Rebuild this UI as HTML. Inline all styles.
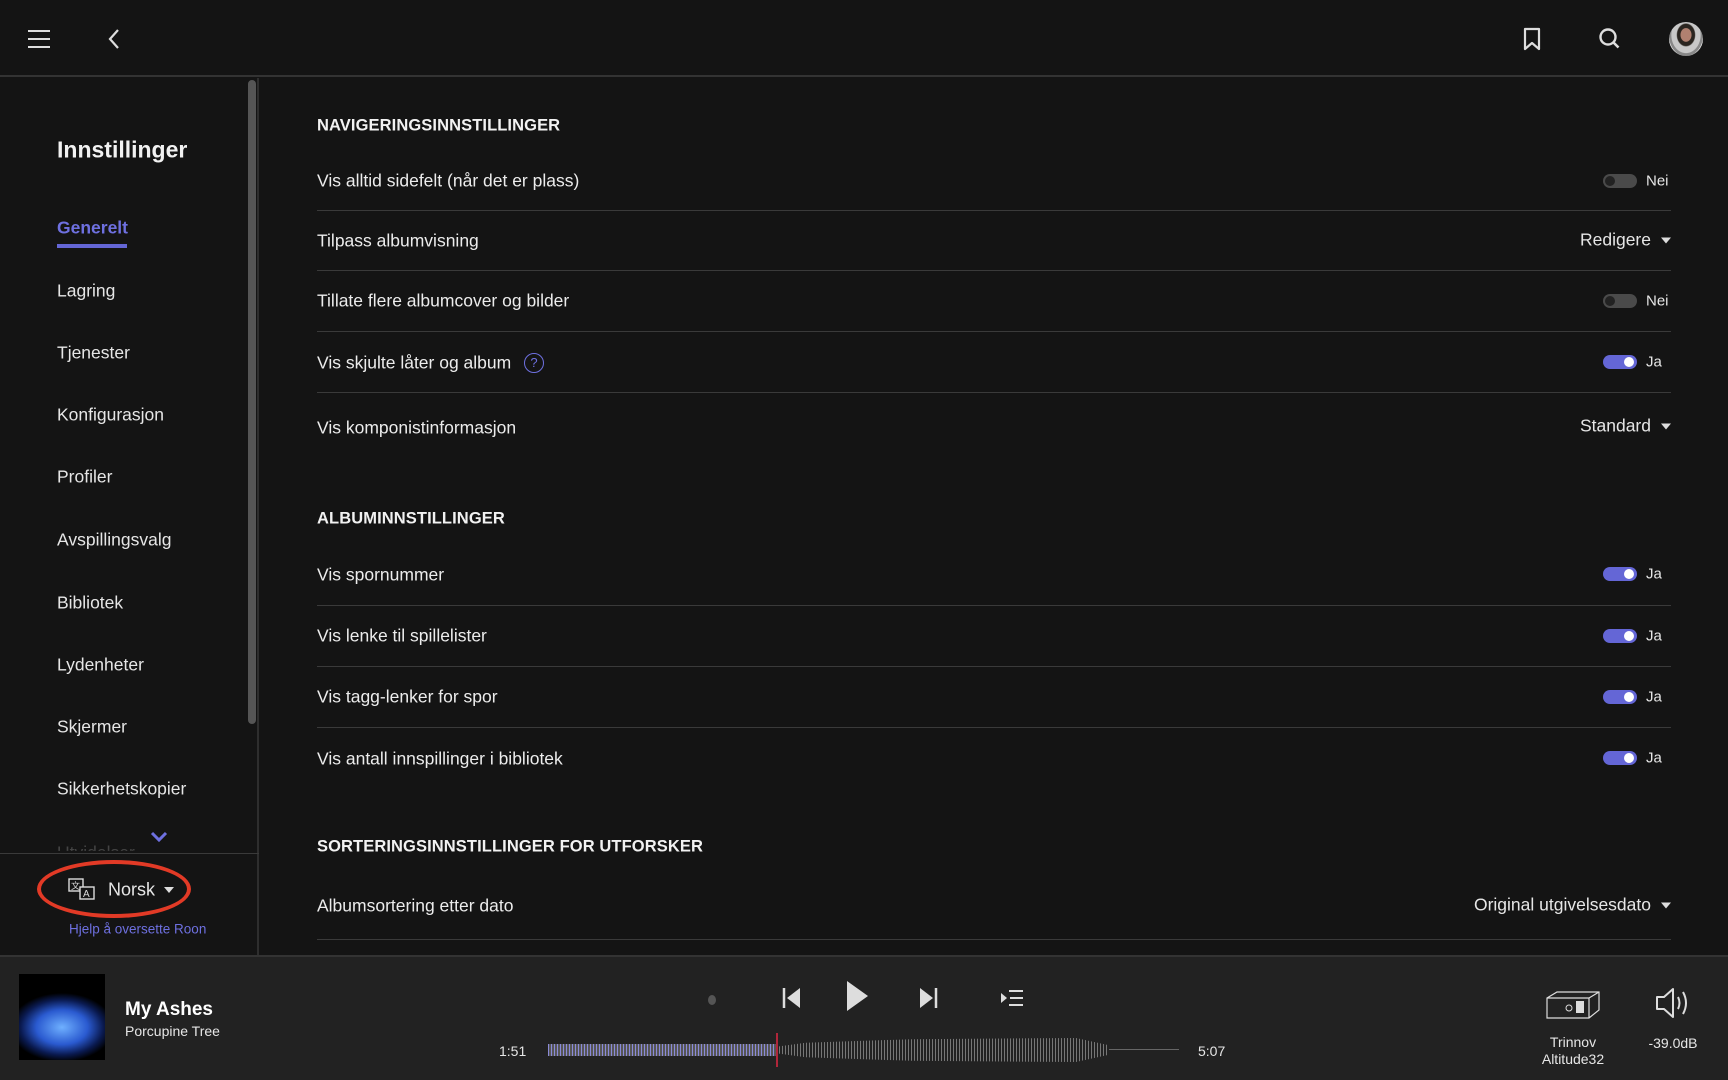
<!DOCTYPE html>
<html><head><meta charset="utf-8"><style>
*{margin:0;padding:0;box-sizing:border-box}
body{width:1728px;height:1080px;background:#141414;font-family:"Liberation Sans",sans-serif;color:#e6e6e6;position:relative;overflow:hidden}
.a{position:absolute}
.hdr{left:0;top:0;width:1728px;height:77px;background:#141414;border-bottom:2px solid #333}
.side{left:0;top:78px;width:259px;height:877px;border-right:2px solid #2e2e2e}
.nav{left:57px;font-size:17.5px;color:#e6e6e6;transform:translateY(-50%)}
.row{left:317px;font-size:17.5px;transform:translateY(-50%);color:#ececec}
.hd{left:317px;font-size:16.5px;font-weight:bold;transform:translateY(-50%);color:#f2f2f2;letter-spacing:.1px}
.div{left:317px;width:1354px;height:1px;background:#3a3a3a}
.tg{left:1603px;width:34px;height:14px;border-radius:7px;transform:translateY(-50%)}
.tg.off{background:#4a4a4a}.tg.off:after{content:"";position:absolute;left:2px;top:2px;width:10px;height:10px;border-radius:50%;background:#222}
.tg.on{background:#6466d6}.tg.on:after{content:"";position:absolute;right:3px;top:2px;width:10px;height:10px;border-radius:50%;background:#fff}
.tl{left:1646px;font-size:15px;transform:translateY(-50%)}
.dd{right:57px;font-size:17.5px;transform:translateY(-50%)}
.dd:after{content:"";display:inline-block;margin-left:10px;border-left:5px solid transparent;border-right:5px solid transparent;border-top:6px solid #ddd;vertical-align:middle}
.bot{left:0;top:955px;width:1728px;height:125px;background:#222;border-top:2px solid #333}
</style></head><body>
<div class="a hdr">
<svg class="a" style="left:27px;top:28px" width="24" height="22"><path d="M1 3h22M1 11h22M1 19h22" stroke="#ddd" stroke-width="2"/></svg>
<svg class="a" style="left:107px;top:28px" width="14" height="22"><path d="M11 2L3 11l8 9" stroke="#ddd" stroke-width="2.2" fill="none"/></svg>
<svg class="a" style="left:1522px;top:27px" width="20" height="24"><path d="M3 2h14v20l-7-6-7 6z" stroke="#ddd" stroke-width="2.2" fill="none" stroke-linejoin="round"/></svg>
<svg class="a" style="left:1598px;top:27px" width="24" height="24"><circle cx="10" cy="10" r="7.5" stroke="#ddd" stroke-width="2.4" fill="none"/><path d="M15.5 15.5l5 5" stroke="#ddd" stroke-width="2.6"/></svg>
<div class="a" style="left:1669px;top:22px;width:34px;height:34px;border-radius:50%;background:radial-gradient(ellipse at 50% 38%,#b08070 0 22%,#2a2520 24% 36%,#c8c8c8 40% 60%,#888 62% 70%,#e0e0e0 72%)"></div>
</div>
<div class="a side">
<div class="a" style="left:248px;top:2px;width:8px;height:644px;border-radius:4px;background:#555"></div>
<div class="a" style="left:57px;top:72px;font-size:23px;font-weight:bold;color:#f2f2f2;transform:translateY(-50%)">Innstillinger</div>
<div class="a" style="left:0px;top:775px;width:259px;height:1px;background:#3a3a3a"></div>
</div>
<div class="a nav" style="top:228px;color:#6e70e0;font-weight:bold">Generelt</div>
<div class="a" style="left:57px;top:244px;width:70px;height:4px;background:#6466d6"></div>
<div class="a nav" style="top:291px">Lagring</div>
<div class="a nav" style="top:353px">Tjenester</div>
<div class="a nav" style="top:415px">Konfigurasjon</div>
<div class="a nav" style="top:477px">Profiler</div>
<div class="a nav" style="top:540px">Avspillingsvalg</div>
<div class="a nav" style="top:603px">Bibliotek</div>
<div class="a nav" style="top:665px">Lydenheter</div>
<div class="a nav" style="top:727px">Skjermer</div>
<div class="a nav" style="top:789px">Sikkerhetskopier</div>
<div class="a nav" style="top:853px;color:#444;clip-path:inset(0 0 60% 0)">Utvidelser</div>
<svg class="a" style="left:150px;top:831px" width="18" height="12"><path d="M2 2l7 7 7-7" stroke="#6e70e0" stroke-width="3" fill="none"/></svg>
<div class="a" style="left:37px;top:860px;width:154px;height:58px;border:4px solid #e23a26;border-radius:50%"></div>
<svg class="a" style="left:68px;top:878px" width="32" height="26"><rect x="1" y="1" width="14" height="12" stroke="#ddd" fill="none" stroke-width="1.4"/><rect x="12" y="9" width="14" height="12" stroke="#ddd" fill="#141414" stroke-width="1.4"/><text x="3" y="11" font-size="9" fill="#ddd">文</text><text x="15" y="19" font-size="10" fill="#ddd">A</text></svg>
<div class="a" style="left:108px;top:890px;font-size:18px;transform:translateY(-50%)">Norsk</div>
<div class="a" style="left:164px;top:887px;border-left:5px solid transparent;border-right:5px solid transparent;border-top:6px solid #ddd"></div>
<div class="a" style="left:69px;top:929px;font-size:13.5px;color:#6e70e0;transform:translateY(-50%)">Hjelp å oversette Roon</div>

<div class="a hd" style="top:126px">NAVIGERINGSINNSTILLINGER</div>
<div class="a row" style="top:181px">Vis alltid sidefelt (når det er plass)</div><div class="a tg off" style="top:181px"></div><div class="a tl" style="top:181px">Nei</div>
<div class="a div" style="top:210px"></div>
<div class="a row" style="top:241px">Tilpass albumvisning</div><div class="a dd" style="top:240px">Redigere</div>
<div class="a div" style="top:270px"></div>
<div class="a row" style="top:301px">Tillate flere albumcover og bilder</div><div class="a tg off" style="top:301px"></div><div class="a tl" style="top:301px">Nei</div>
<div class="a div" style="top:331px"></div>
<div class="a row" style="top:363px">Vis skjulte låter og album</div>
<div class="a" style="left:524px;top:353px;width:20px;height:20px;border:1.6px solid #6e70e0;border-radius:50%;color:#6e70e0;font-size:13px;text-align:center;line-height:17px">?</div>
<div class="a tg on" style="top:362px"></div><div class="a tl" style="top:362px">Ja</div>
<div class="a div" style="top:392px"></div>
<div class="a row" style="top:428px">Vis komponistinformasjon</div><div class="a dd" style="top:426px">Standard</div>

<div class="a hd" style="top:519px">ALBUMINNSTILLINGER</div>
<div class="a row" style="top:575px">Vis spornummer</div><div class="a tg on" style="top:574px"></div><div class="a tl" style="top:574px">Ja</div>
<div class="a div" style="top:605px"></div>
<div class="a row" style="top:636px">Vis lenke til spillelister</div><div class="a tg on" style="top:636px"></div><div class="a tl" style="top:636px">Ja</div>
<div class="a div" style="top:666px"></div>
<div class="a row" style="top:697px">Vis tagg-lenker for spor</div><div class="a tg on" style="top:697px"></div><div class="a tl" style="top:697px">Ja</div>
<div class="a div" style="top:727px"></div>
<div class="a row" style="top:759px">Vis antall innspillinger i bibliotek</div><div class="a tg on" style="top:758px"></div><div class="a tl" style="top:758px">Ja</div>

<div class="a hd" style="top:847px">SORTERINGSINNSTILLINGER FOR UTFORSKER</div>
<div class="a row" style="top:906px">Albumsortering etter dato</div><div class="a dd" style="top:905px">Original utgivelsesdato</div>
<div class="a div" style="top:939px"></div>

<div class="a bot">
<div class="a" style="left:19px;top:17px;width:86px;height:86px;background:radial-gradient(ellipse 60% 40% at 50% 62%,#6fb0ff 0,#2a5ad0 50%,#0a1a50 80%,#000 100%)"></div>
<div class="a" style="left:125px;top:53px;font-size:19px;font-weight:bold;color:#fff;transform:translateY(-50%)">My Ashes</div>
<div class="a" style="left:125px;top:74px;font-size:14px;transform:translateY(-50%)">Porcupine Tree</div>
<div class="a" style="left:708px;top:38px;width:8px;height:10px;border-radius:50%;background:#555"></div>
<svg class="a" style="left:782px;top:30px" width="20" height="22"><path d="M2 1v20" stroke="#ddd" stroke-width="2.5"/><path d="M18 1v20L5 11z" fill="#ddd"/></svg>
<svg class="a" style="left:846px;top:23px" width="24" height="32"><path d="M1 1v30l21-15z" fill="#ddd"/></svg>
<svg class="a" style="left:918px;top:30px" width="20" height="22"><path d="M18 1v20" stroke="#ddd" stroke-width="2.5"/><path d="M2 1v20L15 11z" fill="#ddd"/></svg>
<svg class="a" style="left:1000px;top:33px" width="24" height="16"><path d="M1 3l6 5-6 5z" fill="#ddd"/><path d="M9 1h14M10 8h13M9 15h14" stroke="#ddd" stroke-width="2"/></svg>
<div class="a" style="left:499px;top:94px;font-size:14px;transform:translateY(-50%)">1:51</div>
<div class="a" style="left:1198px;top:94px;font-size:14px;transform:translateY(-50%)">5:07</div>
<div class="a" style="left:548px;top:87px;width:228px;height:12px;background:repeating-linear-gradient(90deg,#8a8ad8 0 1px,#555 1px 3px)"></div>
<div class="a" style="left:776px;top:76px;width:2px;height:34px;background:#b0263a"></div>
<div class="a" style="left:779px;top:81px;width:330px;height:24px;background:repeating-linear-gradient(90deg,#777 0 1px,transparent 1px 3px);clip-path:polygon(0 35%,8% 20%,40% 5%,90% 0,100% 30%,100% 70%,90% 100%,40% 95%,8% 80%,0 65%)"></div>
<div class="a" style="left:1109px;top:92px;width:70px;height:1px;background:#666"></div>
<svg class="a" style="left:1545px;top:33px" width="56" height="30"><path d="M2 8l10-6h42v18l-10 8H2z M2 8h42v20M44 8l10-6" stroke="#ddd" fill="none" stroke-width="1.2"/><circle cx="24" cy="18" r="3" stroke="#ddd" fill="none"/><rect x="31" y="11" width="8" height="12" fill="#ddd"/></svg>
<div class="a" style="left:1573px;top:94px;font-size:14px;text-align:center;line-height:17px;transform:translate(-50%,-50%)">Trinnov<br>Altitude32</div>
<svg class="a" style="left:1655px;top:30px" width="36" height="32"><path d="M2 10h7l9-8v28l-9-8H2z" stroke="#ddd" stroke-width="2" fill="none" stroke-linejoin="round"/><path d="M23 10q3 6 0 12M28 5q6 11 0 22" stroke="#ddd" stroke-width="2" fill="none"/></svg>
<div class="a" style="left:1673px;top:86px;font-size:14px;transform:translate(-50%,-50%)">-39.0dB</div>
</div>
</body></html>
